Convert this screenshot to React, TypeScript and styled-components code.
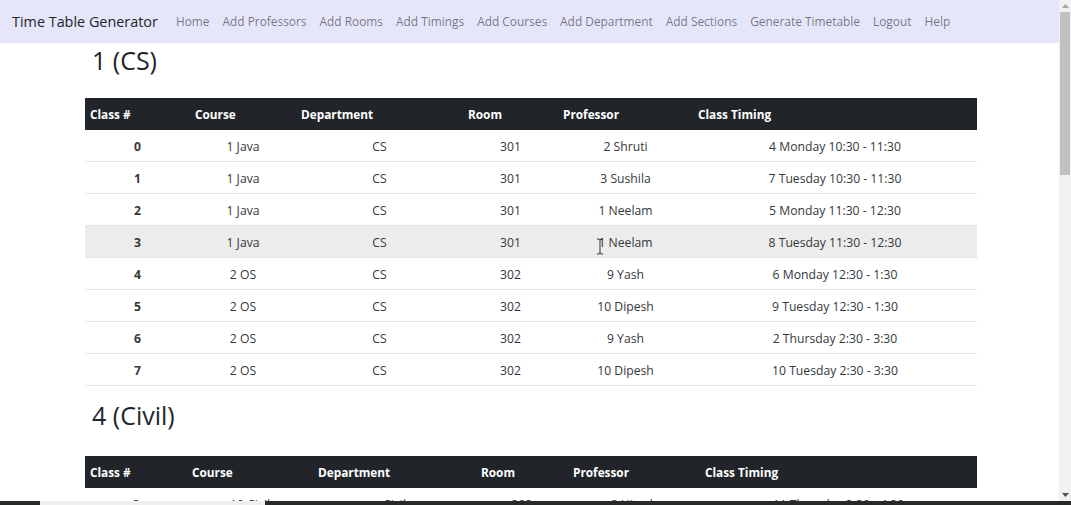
import React from "react";
import styled, { createGlobalStyle } from "styled-components";

const GlobalStyle = createGlobalStyle`
  html, body {
    margin: 0;
    padding: 0;
    overflow: hidden;
    background: #ffffff;
  }
  body {
    font-family: "Open Sans", "Noto Sans", Arial, sans-serif;
    color: #212529;
  }
`;

const Screen = styled.div`
  position: relative;
  width: 1071px;
  height: 505px;
  display: flex;
  flex-direction: column;
  overflow: hidden;
`;

const Viewport = styled.div`
  display: flex;
  height: 501px;
  flex: none;
`;

const Page = styled.div`
  flex: 1;
  overflow: hidden;
  background: #ffffff;
`;

const NavBar = styled.nav`
  height: 43px;
  background: #e6e6fa;
  display: flex;
  align-items: center;
  padding-left: 12px;
`;

const Brand = styled.span`
  font-size: 14.4px;
  color: #212529;
  margin-right: 18px;
  margin-top: -1px;
  white-space: nowrap;
`;

const NavLinks = styled.div`
  display: flex;
  gap: 13px;
  margin-top: -1px;
`;

const NavLink = styled.a`
  font-size: 11.9px;
  color: rgba(0, 0, 0, 0.5);
  text-decoration: none;
  white-space: nowrap;
`;

const Main = styled.main`
  margin-left: 85px;
  width: 892px;
`;

const Heading = styled.h2<{ $top: number; $bottom: number }>`
  font-size: 25px;
  font-weight: 400;
  line-height: 29px;
  margin: ${(p) => p.$top}px 0 ${(p) => p.$bottom}px 7px;
  color: #212529;
`;

const Table = styled.table`
  width: 892px;
  border-collapse: collapse;
  table-layout: fixed;
  font-size: 12.2px;
`;

const Col = styled.col<{ $w: number }>`
  width: ${(p) => p.$w}px;
`;

const HeadCell = styled.th`
  background: #212529;
  color: #ffffff;
  font-size: 11.8px;
  font-weight: 700;
  text-align: left;
  padding: 0 0 0 5px;
  height: 32px;
  white-space: nowrap;
`;

const Row = styled.tr<{ $hover?: boolean }>`
  background: ${(p) => (p.$hover ? "#ececec" : "#ffffff")};
`;

const Cell = styled.td<{ $bold?: boolean }>`
  height: 30px;
  padding: 1px 0 0;
  text-align: center;
  border-bottom: 1px solid #e3e5e8;
  color: #34383b;
  font-weight: ${(p) => (p.$bold ? 700 : 400)};
  white-space: nowrap;
`;

const ScrollBar = styled.div`
  width: 12px;
  background: #f1f1f1;
  display: flex;
  flex-direction: column;
  align-items: center;
`;

const ArrowBox = styled.div`
  height: 12px;
  width: 12px;
  display: flex;
  align-items: center;
  justify-content: center;
`;

const Thumb = styled.div`
  width: 10px;
  height: 163px;
  background: #c1c1c1;
`;

const Track = styled.div`
  flex: 1;
`;

const TaskStrip = styled.div`
  height: 4px;
  flex: none;
  background: #262b27;
  display: flex;
`;

const StripLight = styled.div`
  margin-left: 40px;
  width: 225px;
  background: #efefef;
`;

const Cursor = styled.svg`
  position: absolute;
  left: 596px;
  top: 238px;
`;

type Entry = [string, string, string, string, string, string];

const cs: Entry[] = [
  ["0", "1 Java", "CS", "301", "2 Shruti", "4 Monday 10:30 - 11:30"],
  ["1", "1 Java", "CS", "301", "3 Sushila", "7 Tuesday 10:30 - 11:30"],
  ["2", "1 Java", "CS", "301", "1 Neelam", "5 Monday 11:30 - 12:30"],
  ["3", "1 Java", "CS", "301", "1 Neelam", "8 Tuesday 11:30 - 12:30"],
  ["4", "2 OS", "CS", "302", "9 Yash", "6 Monday 12:30 - 1:30"],
  ["5", "2 OS", "CS", "302", "10 Dipesh", "9 Tuesday 12:30 - 1:30"],
  ["6", "2 OS", "CS", "302", "9 Yash", "2 Thursday 2:30 - 3:30"],
  ["7", "2 OS", "CS", "302", "10 Dipesh", "10 Tuesday 2:30 - 3:30"],
];

const civil: Entry[] = [
  ["8", "10 Civil", "Civil", "303", "8 Hitesh", "11 Thursday 3:30 - 4:30"],
];

const headers = ["Class #", "Course", "Department", "Room", "Professor", "Class Timing"];

const links = [
  "Home",
  "Add Professors",
  "Add Rooms",
  "Add Timings",
  "Add Courses",
  "Add Department",
  "Add Sections",
  "Generate Timetable",
  "Logout",
  "Help",
];

function TimeTable({ widths, rows, hoverRow }: { widths: number[]; rows: Entry[]; hoverRow?: number }) {
  return (
    <Table>
      <colgroup>
        {widths.map((w, i) => (
          <Col key={i} $w={w} />
        ))}
      </colgroup>
      <thead>
        <tr>
          {headers.map((h) => (
            <HeadCell key={h}>{h}</HeadCell>
          ))}
        </tr>
      </thead>
      <tbody>
        {rows.map((r, i) => (
          <Row key={r[0]} $hover={i === hoverRow}>
            {r.map((c, j) => (
              <Cell key={j} $bold={j === 0}>
                {c}
              </Cell>
            ))}
          </Row>
        ))}
      </tbody>
    </Table>
  );
}

export default function App() {
  return (
    <>
      <GlobalStyle />
      <Screen>
        <Viewport>
          <Page>
            <NavBar>
              <Brand>Time Table Generator</Brand>
              <NavLinks>
                {links.map((l) => (
                  <NavLink key={l} href="#">
                    {l}
                  </NavLink>
                ))}
              </NavLinks>
            </NavBar>
            <Main>
              <Heading $top={3} $bottom={23}>1 (CS)</Heading>
              <TimeTable widths={[105, 106, 167, 95, 135, 284]} rows={cs} hoverRow={3} />
              <Heading $top={15} $bottom={26}>4 (Civil)</Heading>
              <TimeTable widths={[102, 126, 163, 92, 132, 277]} rows={civil} />
            </Main>
          </Page>
          <ScrollBar>
            <ArrowBox>
              <svg width="7" height="4" viewBox="0 0 7 4">
                <path d="M0 4 L3.5 0 L7 4 Z" fill="#a3a3a3" />
              </svg>
            </ArrowBox>
            <Thumb />
            <Track />
            <ArrowBox>
              <svg width="7" height="4" viewBox="0 0 7 4">
                <path d="M0 0 L3.5 4 L7 0 Z" fill="#505050" />
              </svg>
            </ArrowBox>
          </ScrollBar>
        </Viewport>
        <TaskStrip>
          <StripLight />
        </TaskStrip>
        <Cursor width="8" height="17" viewBox="0 0 8 17">
          <path d="M1 1 H3 L4 2 L5 1 H7 M4 2 V15 M1 16 H3 L4 15 L5 16 H7" stroke="#333" strokeWidth="1" fill="none" />
        </Cursor>
      </Screen>
    </>
  );
}
